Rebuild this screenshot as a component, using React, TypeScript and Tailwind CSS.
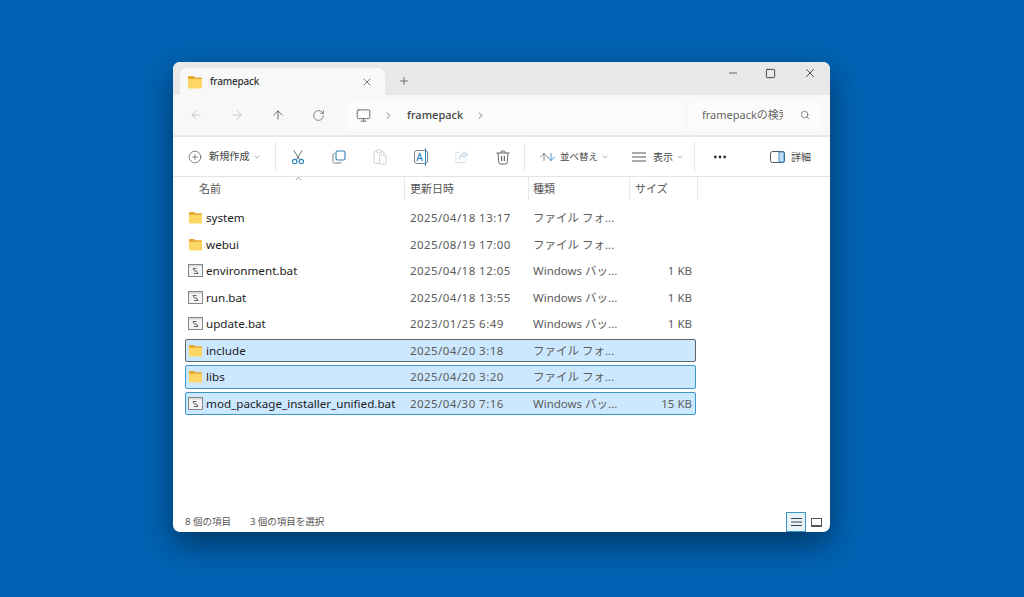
import {
  ArrowDown,
  ArrowLeft,
  ArrowRight,
  ArrowUp,
  ChevronDown,
  ChevronRight,
  ChevronUp,
  Minus,
  Monitor,
  MoreHorizontal,
  Plus,
  PlusCircle,
  RotateCw,
  Search,
  Square,
  X,
} from "lucide-react"

const fontStack = "[font-family:'Noto_Sans','Noto_Sans_CJK_JP',sans-serif]"

type FileRow = {
  name: string
  date: string
  type: string
  size?: string
  folder?: boolean
  selected?: boolean
  focused?: boolean
}

const files: FileRow[] = [
  { name: "system", date: "2025/04/18 13:17", type: "ファイル フォ...", folder: true },
  { name: "webui", date: "2025/08/19 17:00", type: "ファイル フォ...", folder: true },
  { name: "environment.bat", date: "2025/04/18 12:05", type: "Windows バッ...", size: "1 KB" },
  { name: "run.bat", date: "2025/04/18 13:55", type: "Windows バッ...", size: "1 KB" },
  { name: "update.bat", date: "2023/01/25 6:49", type: "Windows バッ...", size: "1 KB" },
  { name: "include", date: "2025/04/20 3:18", type: "ファイル フォ...", folder: true, selected: true, focused: true },
  { name: "libs", date: "2025/04/20 3:20", type: "ファイル フォ...", folder: true, selected: true },
  { name: "mod_package_installer_unified.bat", date: "2025/04/30 7:16", type: "Windows バッ...", size: "15 KB", selected: true },
]

function FolderIcon({ size = 15 }: { size?: number }) {
  return (
    <svg width={size} height={size} viewBox="0 0 16 16" className="shrink-0">
      <path d="M1 3C1 2.400 1.400 2 2 2h3.800c.4 0 .7.1 1 .4L8 3.500h6c.6 0 1 .4 1 1V6H1z" fill="#e6a82e" />
      <path d="M1 5h14v8.300c0 .6-.5 1.100-1.100 1.100H2.100C1.500 14.400 1 13.900 1 13.300z" fill="#fdd766" />
    </svg>
  )
}

function BatIcon() {
  return (
    <svg width={15} height={13} viewBox="0 0 15 13" className="shrink-0">
      <rect x="0.500" y="0.500" width="14" height="12" fill="#f4f4f4" stroke="#83878a" />
      <path d="M1 1h13v1.500H1z" fill="#d8d8d8" />
      <path d="M5 4.500h3.500M5 4.500l1.500 2.500h2l1.500 2.500H6" fill="none" stroke="#5f6468" strokeWidth="1" />
    </svg>
  )
}

function ScissorsIcon() {
  return (
    <svg width="14" height="15" viewBox="0 0 14 15" fill="none">
      <path d="M3 0.500l5.300 9M11 0.500l-5.300 9" stroke="#6a7076" strokeWidth="1" />
      <circle cx="3.700" cy="11.600" r="2.200" stroke="#2c82ba" strokeWidth="1.100" />
      <circle cx="10.300" cy="11.600" r="2.200" stroke="#2c82ba" strokeWidth="1.100" />
    </svg>
  )
}

function CopyIcon() {
  return (
    <svg width="14" height="14" viewBox="0 0 14 14" fill="none">
      <path d="M3 3.500H2.500A1.500 1.500 0 0 0 1 5v6.500A1.500 1.500 0 0 0 2.500 13H8a1.500 1.500 0 0 0 1.500-1" stroke="#7b7f83" strokeWidth="1" />
      <rect x="4" y="1" width="9" height="9" rx="1.500" stroke="#2c82ba" strokeWidth="1.100" />
    </svg>
  )
}

function PasteIcon() {
  return (
    <svg width="14" height="16" viewBox="0 0 14 16" fill="none" stroke="#cfd2d4" strokeWidth="1">
      <rect x="1" y="2.500" width="10" height="12" rx="1.500" />
      <rect x="3.500" y="1" width="5" height="3" rx="1" fill="white" />
      <rect x="6.500" y="6" width="6.500" height="9" rx="1" fill="white" />
    </svg>
  )
}

function RenameIcon() {
  return (
    <div className="relative flex h-[14px] w-[17px] items-center justify-center rounded-[3px] border border-[#7a8490] text-[10px] font-medium leading-none text-[#2c82ba]">
      <span className="mr-[3px]">A</span>
      <span className="absolute left-[9.500px] top-[-3px] h-[18px] w-[1.500px] bg-[#2d8ac7]" />
    </div>
  )
}

function ShareIcon() {
  return (
    <svg width="15" height="14" viewBox="0 0 15 14" fill="none" stroke="#ccdbe4" strokeWidth="1">
      <path d="M5 2H2a1 1 0 0 0-1 1v9a1 1 0 0 0 1 1h9a1 1 0 0 0 1-1V9" />
      <path d="M9.500 1l4.500 3.500L9.500 8V6C7 6 5.500 7 4.500 9.500 4.500 6 6.500 3 9.500 3z" fill="#e3ecf2" />
    </svg>
  )
}

function TrashIcon() {
  return (
    <svg width="14" height="15" viewBox="0 0 14 15" fill="none" stroke="#63676b" strokeWidth="1">
      <path d="M0.500 3h13M5 3V2a1 1 0 0 1 1-1h2a1 1 0 0 1 1 1v1" />
      <path d="M2 3l.8 9.500A1.500 1.500 0 0 0 4.300 14h5.400a1.500 1.500 0 0 0 1.500-1.500L12 3" />
      <path d="M5.600 6v5M8.400 6v5" strokeWidth="1.200" />
    </svg>
  )
}

function ToolButton({ children, className = "" }: { children: React.ReactNode; className?: string }) {
  return <div className={`flex items-center justify-center ${className}`}>{children}</div>
}

function Row({ file }: { file: FileRow }) {
  const rowTone = file.selected ? "bg-[#cce8ff]" : ""
  const borderTone = file.focused
    ? "border-[#5f6468]"
    : file.selected
      ? "border-[#3e95c6]"
      : "border-transparent"
  return (
    <div className={`flex h-[23.500px] items-center rounded-[2px] border ${rowTone} ${borderTone}`}>
      <div className="flex w-[219px] items-center gap-[3px] pl-[2px] text-[#1d1d1d]">
        {file.folder ? <FolderIcon /> : <BatIcon />}
        <span className="whitespace-nowrap text-[11.650px]">{file.name}</span>
      </div>
      <div className="w-[123px] whitespace-nowrap pl-[5px] tracking-[0.450px] text-[#5b5b5b]">{file.date}</div>
      <div className="w-[102px] whitespace-nowrap pl-[5px] text-[#5b5b5b]">{file.type}</div>
      <div className="w-[65px] whitespace-nowrap pr-[3px] text-right text-[#5b5b5b]">{file.size}</div>
    </div>
  )
}

export default function App() {
  return (
    <div className={`h-[597px] w-[1024px] overflow-hidden bg-[#0163b3] pl-[173px] pt-[62px] ${fontStack}`}>
      <div className="flex h-[470px] w-[657px] flex-col overflow-hidden rounded-[7px] bg-white shadow-[0_12px_32px_rgba(0,0,0,0.45)]">
        {/* title bar */}
        <div className="flex h-[33px] shrink-0 items-end bg-[#e8e8e8] pl-[7px]">
          <div className="flex h-[27px] w-[205px] items-center rounded-t-[7px] bg-[#f8f8f8] pl-[7px] pr-[12px]">
            <FolderIcon size={16} />
            <span className="ml-[7px] text-[10px] font-medium tracking-[-0.200px] text-[#333]">framepack</span>
            <X size={12} strokeWidth={1.4} className="ml-auto text-[#444]" />
          </div>
          <Plus size={12} strokeWidth={1.4} className="mb-[8px] ml-[13px] text-[#444]" />
          <div className="mb-[15px] ml-auto flex items-center text-[#222]">
            <Minus size={12} strokeWidth={1.4} className="mr-[26px]" />
            <Square size={11} strokeWidth={1.8} className="mr-[27px]" />
            <X size={14} strokeWidth={1.3} className="mr-[13px]" />
          </div>
        </div>

        {/* address bar */}
        <div className="flex h-[42px] shrink-0 items-center border-b-2 border-[#e8e8e8] bg-[#f8f8f8] pl-[16px]">
          <ArrowLeft size={14} strokeWidth={1.2} className="text-[#b5b5b5]" />
          <ArrowRight size={14} strokeWidth={1.2} className="ml-[27px] text-[#b5b5b5]" />
          <ArrowUp size={14} strokeWidth={1.3} className="ml-[27px] text-[#444]" />
          <RotateCw size={13} strokeWidth={1.3} className="ml-[27px] text-[#555]" />
          <div className="ml-[21px] flex h-[27px] w-[338px] items-center rounded-[4px] bg-[#fbfbfb] pl-[10px]">
            <Monitor size={15} strokeWidth={1.2} className="text-[#444]" />
            <ChevronRight size={11} strokeWidth={1.5} className="ml-[12px] text-[#444]" />
            <span className="ml-[13px] text-[11px] font-medium text-[#444]">framepack</span>
            <ChevronRight size={11} strokeWidth={1.5} className="ml-[12px] text-[#444]" />
          </div>
          <div className="ml-[5px] flex h-[27px] w-[133px] items-center rounded-[4px] bg-[#fbfbfb] pl-[13px]">
            <span className="w-[81px] overflow-hidden whitespace-nowrap text-[11px] text-[#666]">framepackの検索</span>
            <Search size={10} strokeWidth={1.6} className="ml-[17px] text-[#555]" />
          </div>
        </div>

        {/* command bar */}
        <div className="flex h-[40px] shrink-0 items-center border-b border-[#e4e4e4] pt-[1px] text-[9.500px] text-[#444]">
          <div className="flex w-[103px] items-center border-r border-[#e8e8e8] py-[7px] pl-[15px]">
            <PlusCircle size={14} strokeWidth={1} className="text-[#333]" />
            <span className="ml-[7px] text-[10.200px]">新規作成</span>
            <ChevronDown size={8} className="ml-[3px] text-[#888]" />
          </div>
          <ToolButton className="ml-[15px] w-[14px]">
            <ScissorsIcon />
          </ToolButton>
          <ToolButton className="ml-[27px] w-[14px]">
            <CopyIcon />
          </ToolButton>
          <ToolButton className="ml-[27px] w-[14px]">
            <PasteIcon />
          </ToolButton>
          <ToolButton className="ml-[27px] w-[14px]">
            <RenameIcon />
          </ToolButton>
          <ToolButton className="ml-[27px] w-[14px]">
            <ShareIcon />
          </ToolButton>
          <ToolButton className="ml-[27px] w-[14px]">
            <TrashIcon />
          </ToolButton>
          <div className="ml-[14px] flex items-center border-l border-[#e8e8e8] py-[7px] pl-[13px]">
            <ArrowUp size={12} strokeWidth={1.3} className="text-[#444]" />
            <ArrowDown size={12} strokeWidth={1.5} className="-ml-[5px] text-[#1a73b8]" />
            <span className="ml-[3px]">並べ替え</span>
            <ChevronDown size={8} className="ml-[3px] text-[#888]" />
          </div>
          <div className="ml-[23px] flex items-center">
            <svg width="14" height="10" viewBox="0 0 14 10" className="text-[#555]">
              <path d="M0 1h14M0 5h14M0 9h14" stroke="currentColor" strokeWidth="1" />
            </svg>
            <span className="ml-[7px] text-[10px]">表示</span>
            <ChevronDown size={8} className="ml-[3px] text-[#888]" />
          </div>
          <div className="ml-[10px] flex items-center border-l border-[#e8e8e8] py-[7px] pl-[17px]">
            <MoreHorizontal size={16} strokeWidth={2.2} className="text-[#333]" />
          </div>
          <svg width="15" height="12" viewBox="0 0 15 12" className="ml-[42px]">
            <rect x="0.500" y="0.500" width="14" height="11" rx="2" fill="none" stroke="#4a5a68" />
            <rect x="9" y="1" width="5" height="10" fill="#bfe0f5" stroke="#2a7ab5" strokeWidth="0.800" />
          </svg>
          <span className="ml-[6px] text-[10px]">詳細</span>
        </div>

        {/* column header */}
        <div className="relative flex h-[23px] shrink-0 items-center text-[11px] text-[#555]">
          <ChevronUp size={9} strokeWidth={1.6} className="absolute left-[121px] top-[-3px] text-[#666]" />
          <div className="flex h-full w-[232px] items-center border-r border-[#e8e8e8] pl-[26px] pt-[2px]">名前</div>
          <div className="flex h-full w-[124px] items-center border-r border-[#e8e8e8] pl-[5px] pt-[2px]">更新日時</div>
          <div className="flex h-full w-[101px] items-center border-r border-[#e8e8e8] pl-[4px] pt-[2px]">種類</div>
          <div className="flex h-full w-[68px] items-center border-r border-[#e8e8e8] pl-[5px] pt-[2px]">サイズ</div>
        </div>

        {/* file list */}
        <div className="ml-[12px] mt-[6px] flex w-[511px] flex-col gap-[3px] self-start text-[11.500px]">
          {files.map((file) => (
            <Row key={file.name} file={file} />
          ))}
        </div>

        {/* status bar */}
        <div className="mt-auto flex h-[23px] items-center pl-[12px] text-[9.500px] text-[#555]">
          <span className="pt-[3px]">8 個の項目</span>
          <span className="ml-[19px] pt-[3px]">3 個の項目を選択</span>
          <div className="ml-auto mr-[4px] flex items-center self-end">
            <div className="flex h-[20px] w-[20px] items-center justify-center border border-[#3e95c6] bg-[#e5f3fb]">
              <svg width="11" height="10" viewBox="0 0 11 10">
                <path d="M0 1.500h11M0 5h11M0 8.500h11" stroke="#444" strokeWidth="1" />
              </svg>
            </div>
            <div className="flex h-[20px] w-[20px] items-center justify-center">
              <div className="h-[9px] w-[11px] border border-b-2 border-[#555]" />
            </div>
          </div>
        </div>
      </div>
    </div>
  )
}
